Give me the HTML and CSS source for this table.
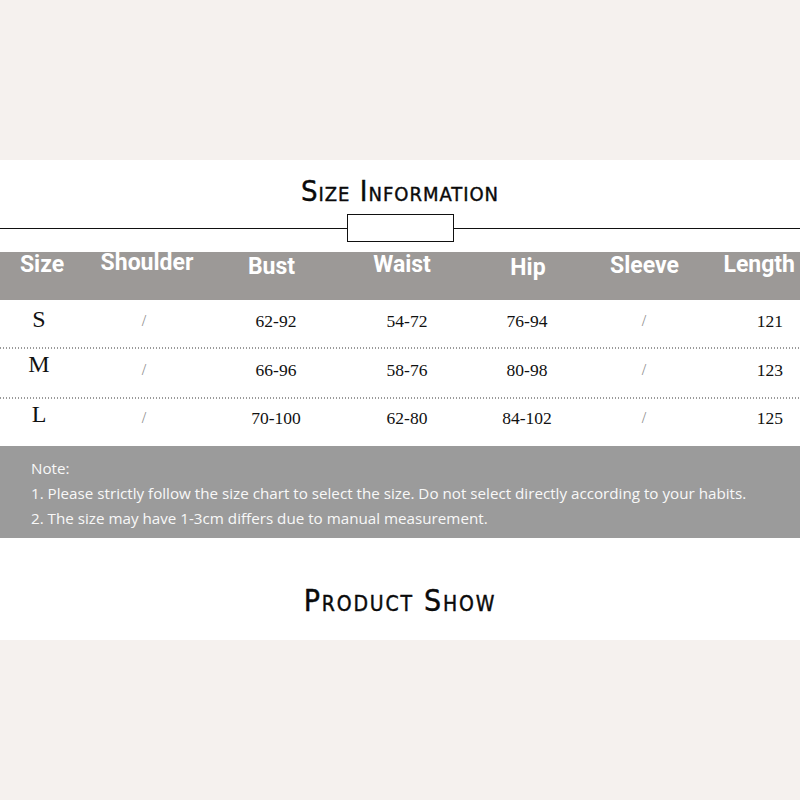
FILE: index.html
```html
<!DOCTYPE html>
<html>
<head>
<meta charset="utf-8">
<link rel="stylesheet" href="styles.css">
</head>
<body>
<div class="band"></div>
<main class="sheet">
  <h1 class="title">Size Information</h1>
  <div class="divider">
    <span class="rule"></span>
    <span class="box"></span>
    <span class="rule"></span>
  </div>
  <div class="thead">
    <span class="th">Size</span>
    <span class="th up2">Shoulder</span>
    <span class="th dn2">Bust</span>
    <span class="th">Waist</span>
    <span class="th dn3">Hip</span>
    <span class="th dn1">Sleeve</span>
    <span class="th last">Length</span>
  </div>
  <div class="tbody">
    <div class="row r1">
      <span class="td size">S</span>
      <span class="td slash">/</span>
      <span class="td">62-92</span>
      <span class="td">54-72</span>
      <span class="td">76-94</span>
      <span class="td slash">/</span>
      <span class="td last">121</span>
    </div>
    <div class="dots"></div>
    <div class="row r2">
      <span class="td size">M</span>
      <span class="td slash">/</span>
      <span class="td">66-96</span>
      <span class="td">58-76</span>
      <span class="td">80-98</span>
      <span class="td slash">/</span>
      <span class="td last">123</span>
    </div>
    <div class="dots"></div>
    <div class="row r3">
      <span class="td size">L</span>
      <span class="td slash">/</span>
      <span class="td">70-100</span>
      <span class="td">62-80</span>
      <span class="td">84-102</span>
      <span class="td slash">/</span>
      <span class="td last">125</span>
    </div>
  </div>
  <div class="note">
    <p>Note:</p>
    <p>1. Please strictly follow the size chart to select the size. Do not select directly according to your habits.</p>
    <p>2. The size may have 1-3cm differs due to manual measurement.</p>
  </div>
  <h2 class="title show">Product Show</h2>
</main>
<div class="band bottom"></div>
</body>
</html>
```
FILE: styles.css
```css
html, body {
  margin: 0;
  padding: 0;
  background: #f5f1ee;
}
body {
  width: 800px;
  height: 800px;
  overflow: hidden;
}
.band {
  height: 160px;
  background: #f5f1ee;
}
.sheet {
  background: #ffffff;
  height: 480px;
  display: flex;
  flex-direction: column;
}
.title {
  margin: 0;
  padding-top: 14px;
  height: 34px;
  margin-bottom: 6px;
  line-height: 34px;
  text-align: center;
  font-family: "DejaVu Sans Condensed", "DejaVu Sans", sans-serif;
  font-variant: small-caps;
  font-weight: normal;
  font-size: 29px;
  color: #0a0a0a;
  letter-spacing: 1px;
  -webkit-text-stroke: 0.4px #0a0a0a;
}
.divider {
  display: flex;
  align-items: center;
  height: 28px;
}
.rule {
  flex: 1;
  height: 1px;
  background: #111;
}
.box {
  width: 105px;
  height: 26px;
  border: 1px solid #111;
  background: #fff;
}
.thead {
  margin-top: 10px;
  height: 48px;
  background: #9c9997;
  display: grid;
  grid-template-columns: 84px 126px 123px 138px 114px 119px 1fr;
  align-items: start;
}
.th {
  font-family: Roboto, "Liberation Sans", sans-serif;
  font-weight: bold;
  font-size: 23px;
  line-height: 26px;
  color: #ffffff;
  text-align: center;
}
.th.up2 { margin-top: -2px; }
.th.dn1 { margin-top: 1px; }
.th.dn2 { margin-top: 2px; }
.th.dn3 { margin-top: 3px; }
.th.last {
  text-align: right;
  padding-right: 5px;
}
.tbody {
  display: flex;
  flex-direction: column;
}
.row {
  display: grid;
  grid-template-columns: 78px 132px 132px 130px 110px 124px 1fr;
  align-items: start;
}
.r1 { height: 47px; }
.r2 { height: 48px; }
.r3 { height: 47px; }
.td {
  font-family: "Liberation Serif", "Times New Roman", serif;
  font-size: 17.5px;
  line-height: 24px;
  color: #111;
  text-align: center;
  padding-top: 9px;
}
.r2 .td { padding-top: 9px; }
.r3 .td { padding-top: 7px; }
.td.size {
  font-size: 24px;
  padding-top: 7px;
}
.r2 .td.size { padding-top: 3px; }
.r3 .td.size { padding-top: 3px; }
.td.slash {
  color: #8a8a8a;
  font-size: 16px;
}
.td.last {
  text-align: right;
  padding-right: 17px;
}
.dots {
  height: 2px;
  background-image: repeating-linear-gradient(to right, #9a9a9a 0 1px, transparent 1px 3px);
}
.note {
  height: 82px;
  padding: 10px 0 0 31px;
  background: #9b9b9b;
  font-family: "Open Sans", "Noto Sans", sans-serif;
  font-size: 15.2px;
  line-height: 25px;
  color: #f8f8f8;
}
.note p {
  margin: 0;
}
.title.show {
  padding-top: 46px;
  margin-bottom: 0;
  font-size: 30px;
  letter-spacing: 1.8px;
}
.band.bottom {
  height: 160px;
}
```
